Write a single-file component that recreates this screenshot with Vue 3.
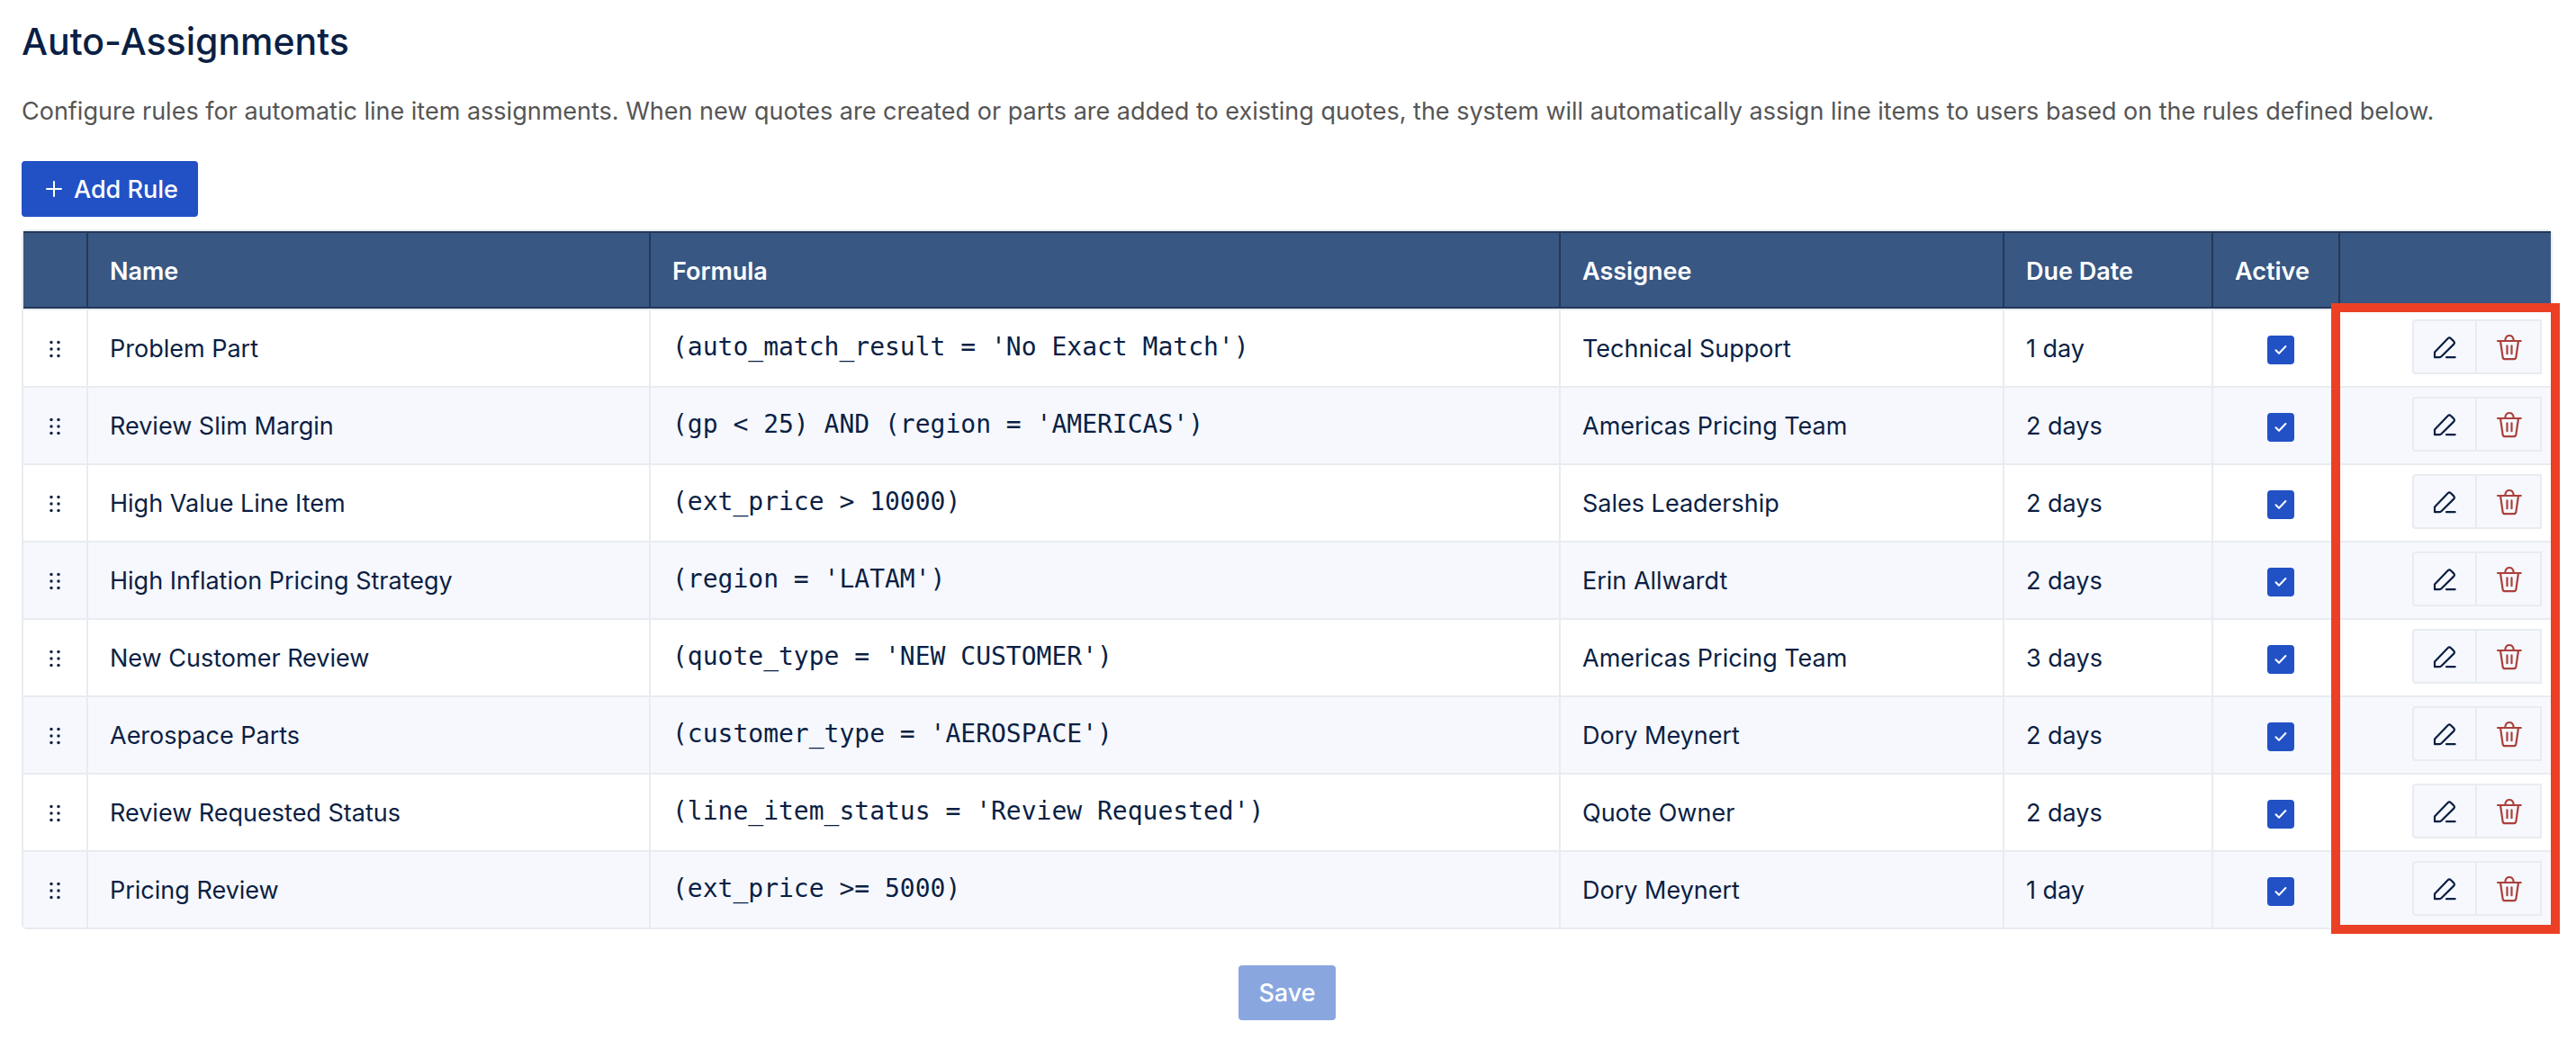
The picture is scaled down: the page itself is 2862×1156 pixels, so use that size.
<script setup>
import { ref } from 'vue'

const rules = ref([
  { name: 'Problem Part', formula: "(auto_match_result = 'No Exact Match')", assignee: 'Technical Support', due: '1 day', active: true },
  { name: 'Review Slim Margin', formula: "(gp < 25) AND (region = 'AMERICAS')", assignee: 'Americas Pricing Team', due: '2 days', active: true },
  { name: 'High Value Line Item', formula: '(ext_price > 10000)', assignee: 'Sales Leadership', due: '2 days', active: true },
  { name: 'High Inflation Pricing Strategy', formula: "(region = 'LATAM')", assignee: 'Erin Allwardt', due: '2 days', active: true },
  { name: 'New Customer Review', formula: "(quote_type = 'NEW CUSTOMER')", assignee: 'Americas Pricing Team', due: '3 days', active: true },
  { name: 'Aerospace Parts', formula: "(customer_type = 'AEROSPACE')", assignee: 'Dory Meynert', due: '2 days', active: true },
  { name: 'Review Requested Status', formula: "(line_item_status = 'Review Requested')", assignee: 'Quote Owner', due: '2 days', active: true },
  { name: 'Pricing Review', formula: '(ext_price >= 5000)', assignee: 'Dory Meynert', due: '1 day', active: true },
])
</script>

<template>
  <main class="page">
    <h1 class="title">Auto-Assignments</h1>
    <p class="intro">
      Configure rules for automatic line item assignments. When new quotes are created or parts are added to existing quotes, the system will automatically assign line items to users based on the rules defined below.
    </p>
    <button type="button" class="btn add">
      <svg width="20" height="20" viewBox="0 0 20 20" aria-hidden="true">
        <path d="M10 1V17M2 9H18" fill="none" stroke="currentColor" stroke-width="2" stroke-linecap="round" />
      </svg>
      Add Rule
    </button>

    <div class="table-wrap">
      <table class="rules">
        <colgroup>
          <col class="col-drag" />
          <col class="col-name" />
          <col />
          <col class="col-assignee" />
          <col class="col-due" />
          <col class="col-active" />
          <col class="col-actions" />
        </colgroup>
        <thead>
          <tr>
            <th></th>
            <th>Name</th>
            <th>Formula</th>
            <th>Assignee</th>
            <th>Due Date</th>
            <th>Active</th>
            <th></th>
          </tr>
        </thead>
        <tbody>
          <tr v-for="rule in rules" :key="rule.name">
            <td class="drag">
              <svg width="14" height="20" viewBox="0 0 14 20" fill="currentColor" aria-hidden="true">
                <circle cx="3" cy="2.5" r="1.7" /><circle cx="11" cy="2.5" r="1.7" />
                <circle cx="3" cy="10" r="1.7" /><circle cx="11" cy="10" r="1.7" />
                <circle cx="3" cy="17.5" r="1.7" /><circle cx="11" cy="17.5" r="1.7" />
              </svg>
            </td>
            <td>{{ rule.name }}</td>
            <td class="formula"><code>{{ rule.formula }}</code></td>
            <td>{{ rule.assignee }}</td>
            <td>{{ rule.due }}</td>
            <td class="active">
              <label class="check">
                <input v-model="rule.active" type="checkbox" :aria-label="`${rule.name} active`" />
                <svg width="14" height="12" viewBox="0 0 14 12" aria-hidden="true">
                  <path d="M1.5 6.2L5 9.8L12.4 2" fill="none" stroke="#fff" stroke-width="2" stroke-linecap="round" stroke-linejoin="round" />
                </svg>
              </label>
            </td>
            <td class="actions">
              <div class="group">
                <button type="button" class="icon-btn" :aria-label="`Edit ${rule.name}`">
                  <svg width="26" height="26" viewBox="0 0 26 26" fill="none" stroke="currentColor" stroke-width="2.2" stroke-linecap="round" stroke-linejoin="round">
                    <path d="M2 24.2V18.6L16.6 3.2Q18.3 1.6 20 3.2L23.2 6.4Q24.6 8 23.2 9.6L9.4 23.2Q8.4 24.2 7 24.2ZM15 24.2H24.6" />
                  </svg>
                </button>
                <button type="button" class="icon-btn danger" :aria-label="`Delete ${rule.name}`">
                  <svg width="30" height="30" viewBox="-2 0 30 30" fill="none" stroke="currentColor" stroke-width="2.2" stroke-linecap="round" stroke-linejoin="round">
                    <path d="M1 8H26.8M9.4 8V6.6Q10 2 14 2Q18 2 18.6 6.6V8" />
                    <path d="M4 8L6.6 26Q6.9 28.2 9 28.2H19Q21.1 28.2 21.4 26L24 8" />
                    <path d="M11.5 13.4V22.2M16.5 13.4V22.2" />
                  </svg>
                </button>
              </div>
            </td>
          </tr>
        </tbody>
      </table>
      <div class="highlight" aria-hidden="true"></div>
    </div>

    <button type="button" class="btn save" disabled>Save</button>
  </main>
</template>

<style>
body {
  margin: 0;
  background: #fff;
}
</style>

<style scoped>
.page {
  display: flex;
  flex-direction: column;
  padding: 16px 26px 20px 24px;
  font-family: Inter, "Liberation Sans", sans-serif;
  font-size: 27px;
  line-height: 40px;
  color: #0b1f44;
}
.title {
  margin: 0;
  font-size: 41px;
  font-weight: 500;
  line-height: 60px;
}
.intro {
  margin: 28px 0 35px;
  color: #555;
}
.btn {
  display: flex;
  align-items: center;
  justify-content: center;
  box-sizing: border-box;
  height: 61px;
  border: 0;
  border-radius: 4px;
  background: #2251c5;
  color: #fff;
  font: inherit;
  font-weight: 500;
}
.add {
  align-self: flex-start;
  gap: 12px;
  height: 62px;
  padding: 2px 22px 0 26px;
}
.save {
  align-self: center;
  margin-top: 40px;
  padding: 0 22px;
  background: #8aa6df;
}
.table-wrap {
  position: relative;
  margin-top: 14px;
  border: 2px solid #e8ecf1;
  border-radius: 6px;
}
.rules {
  width: 100%;
  table-layout: fixed;
  border-collapse: separate;
  border-spacing: 0;
}
.col-drag { width: 72px; }
.col-name { width: 625px; }
.col-assignee { width: 493px; }
.col-due { width: 232px; }
.col-active { width: 141px; }
.col-actions { width: 234px; }
th,
td {
  box-sizing: border-box;
  height: 86px;
  padding: 2px 24px 0;
  border-right: 2px solid #e8ecf1;
  text-align: left;
  vertical-align: middle;
  white-space: nowrap;
}
th {
  padding-top: 4px;
  background: #385783;
  border-top: 2px solid #253858;
  border-bottom: 2px solid #253858;
  border-right-color: #253858;
  color: #fff;
  font-weight: 600;
}
td {
  border-top: 2px solid #e8ecf1;
}
tbody tr:nth-child(even) {
  background: #f6f8fd;
}
th:last-child,
td:last-child {
  border-right: 0;
}
.drag {
  padding: 2px 0 0;
  text-align: center;
}
.drag svg,
.icon-btn svg {
  display: block;
  margin: 0 auto;
}
.formula {
  padding: 0 24px 2px;
}
code {
  font-family: "DejaVu Sans Mono", monospace;
  font-size: 28px;
  display: block;
}
.active {
  padding: 4px 0 0 10px;
}
.check {
  display: grid;
  place-items: center;
  width: 30px;
  margin: 0 auto;
}
.check input,
.check svg {
  grid-area: 1 / 1;
}
.check input {
  appearance: none;
  width: 30px;
  height: 32px;
  margin: 0;
  border: 2px solid #2251c5;
  border-radius: 4px;
}
.check input:checked {
  background: #2251c5;
}
.check svg {
  pointer-events: none;
}
.actions {
  padding: 0 10px 3px 0;
}
.group {
  display: flex;
  justify-content: flex-end;
}
.icon-btn {
  box-sizing: border-box;
  width: 72px;
  height: 61px;
  padding: 0;
  border: 2px solid #e8ecf1;
  background: #f6f8fd;
  color: #0b1f44;
}
.icon-btn:first-child {
  border-radius: 4px 0 0 4px;
}
.icon-btn.danger {
  border-left: 0;
  color: #ab403c;
}
.highlight {
  position: absolute;
  top: 80px;
  right: -10px;
  bottom: -7px;
  box-sizing: border-box;
  width: 254px;
  border: 10px solid #eb4025;
  pointer-events: none;
}
</style>
